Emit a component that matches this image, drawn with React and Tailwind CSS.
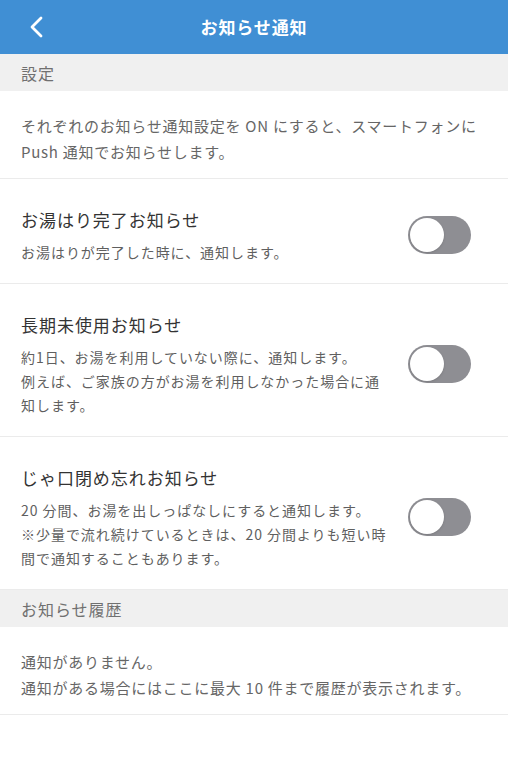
// お知らせ通知 settings screen

import React, { useState } from "react";

const font = { fontFamily: '"Noto Sans CJK JP", "Noto Sans", sans-serif' };

function Toggle({ on, onChange }) {
    return (
        <button
            type="button"
            onClick={() => onChange(!on)}
            className={`shrink-0 w-[63px] h-[38px] rounded-full p-[2px] flex transition ${on ? "bg-[#4cd964] justify-end" : "bg-[#8e8e93] justify-start"}`}
        >
            <span className="w-[34px] h-[34px] rounded-full bg-white shadow-sm" />
        </button>
    );
}

function SectionHeader({ children }) {
    return (
        <div className="h-[37px] bg-[#f0f0f0] flex items-center px-[21px] text-[16px] text-[#707070] tracking-[0.06em]">
            {children}
        </div>
    );
}

function SettingRow({ title, lines, on, onChange }) {
    return (
        <div className="flex items-center justify-between pl-[21px] pr-[37px] pt-[27px] pb-[19px] border-b border-[#ebebeb]">
            <div className="min-w-0 tracking-[0.06em]">
                <p className="text-[17px] leading-[28px] text-[#333]">{title}</p>
                <p className="mt-[6px] text-[14px] leading-[24px] text-[#5f5f5f] whitespace-nowrap">
                    {lines.map((l, i) => (
                        <React.Fragment key={i}>
                            {i > 0 && <br />}
                            {l}
                        </React.Fragment>
                    ))}
                </p>
            </div>
            <Toggle on={on} onChange={onChange} />
        </div>
    );
}

export default function App() {
    const [bath, setBath] = useState(false);
    const [unused, setUnused] = useState(false);
    const [faucet, setFaucet] = useState(false);

    return (
        <div className="w-[508px] min-h-[758px] bg-white" style={font}>
            {/* header */}
            <div className="relative h-[54px] bg-[#408fd4] flex items-center justify-center">
                <button type="button" className="absolute left-[24px] top-1/2 -translate-y-1/2 p-1">
                    <svg width="18" height="24" viewBox="0 0 18 24" fill="none">
                        <path d="M13 3L4 12l9 9" stroke="white" strokeWidth="2.8" strokeLinecap="round" strokeLinejoin="round" />
                    </svg>
                </button>
                <h1 className="text-white text-[17px] font-bold tracking-[0.05em]">お知らせ通知</h1>
            </div>

            <SectionHeader>設定</SectionHeader>

            <p className="px-[21px] pt-[22px] pb-[13px] text-[15px] leading-[26px] text-[#666] tracking-[0.05em] border-b border-[#ebebeb] whitespace-nowrap">
                それぞれのお知らせ通知設定を ON にすると、スマートフォンに
                <br />
                Push 通知でお知らせします。
            </p>

            <SettingRow
                title="お湯はり完了お知らせ"
                lines={["お湯はりが完了した時に、通知します。"]}
                on={bath}
                onChange={setBath}
            />
            <SettingRow
                title="長期未使用お知らせ"
                lines={[
                    "約1日、お湯を利用していない際に、通知します。",
                    "例えば、ご家族の方がお湯を利用しなかった場合に通",
                    "知します。",
                ]}
                on={unused}
                onChange={setUnused}
            />
            <SettingRow
                title="じゃ口閉め忘れお知らせ"
                lines={[
                    "20 分間、お湯を出しっぱなしにすると通知します。",
                    "※少量で流れ続けているときは、20 分間よりも短い時",
                    "間で通知することもあります。",
                ]}
                on={faucet}
                onChange={setFaucet}
            />

            <SectionHeader>お知らせ履歴</SectionHeader>

            <p className="px-[21px] pt-[22px] pb-[13px] text-[15px] leading-[26px] text-[#666] tracking-[0.05em] border-b border-[#ebebeb] whitespace-nowrap">
                通知がありません。
                <br />
                通知がある場合にはここに最大 10 件まで履歴が表示されます。
            </p>
        </div>
    );
}
